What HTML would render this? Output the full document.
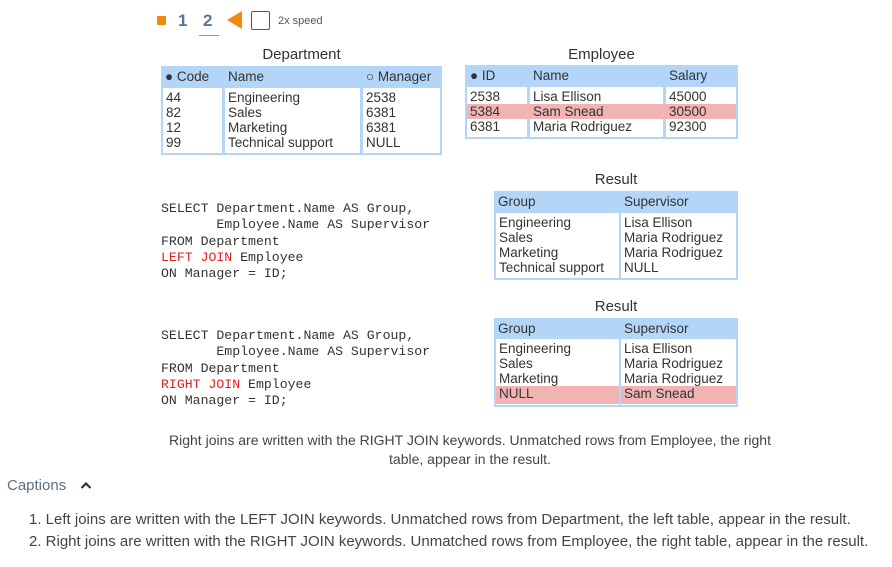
<!DOCTYPE html>
<html><head><meta charset="utf-8"><style>
*{margin:0;padding:0;box-sizing:border-box}
body{width:892px;height:567px;background:#fff;font-family:"Liberation Sans",sans-serif;color:#333;position:relative;overflow:hidden}
.a{position:absolute}
.tbl{position:absolute;background:#b2d5f8}
.h{position:absolute;font-size:13.5px;line-height:16px;color:#333}
.col{position:absolute;background:#fff;font-size:13.5px;line-height:15px;padding:2px 3px;white-space:nowrap}
.pk{background:#f2b3b3;display:block;margin:0 -3px;padding:0 3px}
.ttl{position:absolute;font-size:15px;text-align:center}
pre{position:absolute;font-family:"Liberation Mono",monospace;font-size:13.2px;line-height:16.3px;color:#333}
.r{color:#e02020}
</style></head><body>
<div class="a" style="left:157px;top:16px;width:9px;height:9px;background:#f08a0c;border-radius:1px"></div>
<div class="a" style="left:178px;top:11px;font-size:17px;font-weight:bold;color:#5a7591">1</div>
<div class="a" style="left:203px;top:11px;font-size:17px;font-weight:bold;color:#5a7591">2</div>
<div class="a" style="left:199px;top:35px;width:20px;height:1px;background:#f08a0c"></div>
<svg class="a" style="left:227px;top:11px" width="16" height="18"><polygon points="15,0 15,18 0,9" fill="#f08a0c"/></svg>
<div class="a" style="left:251px;top:11px;width:19px;height:19px;border:1px solid #555;border-radius:2px"></div>
<div class="a" style="left:278px;top:15px;font-size:11px;color:#555">2x speed</div>

<div class="ttl" style="left:161px;width:281px;top:46px">Department</div>
<div class="tbl" style="left:161px;top:66px;width:281px;height:89px"></div>
<div class="h" style="left:165px;top:69px">● Code</div>
<div class="h" style="left:228px;top:69px">Name</div>
<div class="h" style="left:366px;top:69px">○ Manager</div>
<div class="col" style="left:163px;top:88px;width:59px;height:65px">44<br>82<br>12<br>99</div>
<div class="col" style="left:225px;top:88px;width:135px;height:65px">Engineering<br>Sales<br>Marketing<br>Technical support</div>
<div class="col" style="left:363px;top:88px;width:77px;height:65px">2538<br>6381<br>6381<br>NULL</div>

<div class="ttl" style="left:465px;width:273px;top:46px">Employee</div>
<div class="tbl" style="left:465px;top:65px;width:273px;height:74px"></div>
<div class="h" style="left:470px;top:68px">● ID</div>
<div class="h" style="left:533px;top:68px">Name</div>
<div class="h" style="left:669px;top:68px">Salary</div>
<div class="col" style="left:467px;top:87px;width:60px;height:50px">2538<br><span class="pk">5384</span>6381</div>
<div class="col" style="left:530px;top:87px;width:133px;height:50px">Lisa Ellison<br><span class="pk">Sam Snead</span>Maria Rodriguez</div>
<div class="col" style="left:666px;top:87px;width:70px;height:50px">45000<br><span class="pk">30500</span>92300</div>
<div class="a" style="left:527px;top:104px;width:3px;height:15px;background:#f2b3b3"></div>
<div class="a" style="left:663px;top:104px;width:3px;height:15px;background:#f2b3b3"></div>

<pre style="left:161px;top:201px">SELECT Department.Name AS Group,
       Employee.Name AS Supervisor
FROM Department
<span class="r">LEFT JOIN</span> Employee
ON Manager = ID;</pre>

<div class="ttl" style="left:494px;width:244px;top:171px">Result</div>
<div class="tbl" style="left:494px;top:191px;width:244px;height:89px"></div>
<div class="h" style="left:498px;top:194px">Group</div>
<div class="h" style="left:624px;top:194px">Supervisor</div>
<div class="col" style="left:496px;top:213px;width:123px;height:65px">Engineering<br>Sales<br>Marketing<br>Technical support</div>
<div class="col" style="left:621px;top:213px;width:115px;height:65px">Lisa Ellison<br>Maria Rodriguez<br>Maria Rodriguez<br>NULL</div>

<pre style="left:161px;top:328px">SELECT Department.Name AS Group,
       Employee.Name AS Supervisor
FROM Department
<span class="r">RIGHT JOIN</span> Employee
ON Manager = ID;</pre>

<div class="ttl" style="left:494px;width:244px;top:298px">Result</div>
<div class="tbl" style="left:494px;top:318px;width:244px;height:89px"></div>
<div class="h" style="left:498px;top:321px">Group</div>
<div class="h" style="left:624px;top:321px">Supervisor</div>
<div class="col" style="left:496px;top:339px;width:123px;height:66px">Engineering<br>Sales<br>Marketing<br><span class="pk" style="padding-bottom:3px">NULL</span></div>
<div class="col" style="left:621px;top:339px;width:115px;height:66px">Lisa Ellison<br>Maria Rodriguez<br>Maria Rodriguez<br><span class="pk" style="padding-bottom:3px">Sam Snead</span></div>

<div class="a" style="left:150px;width:640px;top:431px;font-size:14px;line-height:19px;text-align:center;color:#444">Right joins are written with the RIGHT JOIN keywords. Unmatched rows from Employee, the right table, appear in the result.</div>

<div class="a" style="left:7px;top:477px;font-size:15px;color:#5a6f85">Captions</div>
<svg class="a" style="left:80px;top:481px" width="12" height="9"><polyline points="1.5,7 6,2.5 10.5,7" fill="none" stroke="#333" stroke-width="2.2"/></svg>
<div class="a" style="left:29px;top:509px;font-size:15px;line-height:22px;color:#444;white-space:nowrap">1. Left joins are written with the LEFT JOIN keywords. Unmatched rows from Department, the left table, appear in the result.<br>2. Right joins are written with the RIGHT JOIN keywords. Unmatched rows from Employee, the right table, appear in the result.</div>
</body></html>
